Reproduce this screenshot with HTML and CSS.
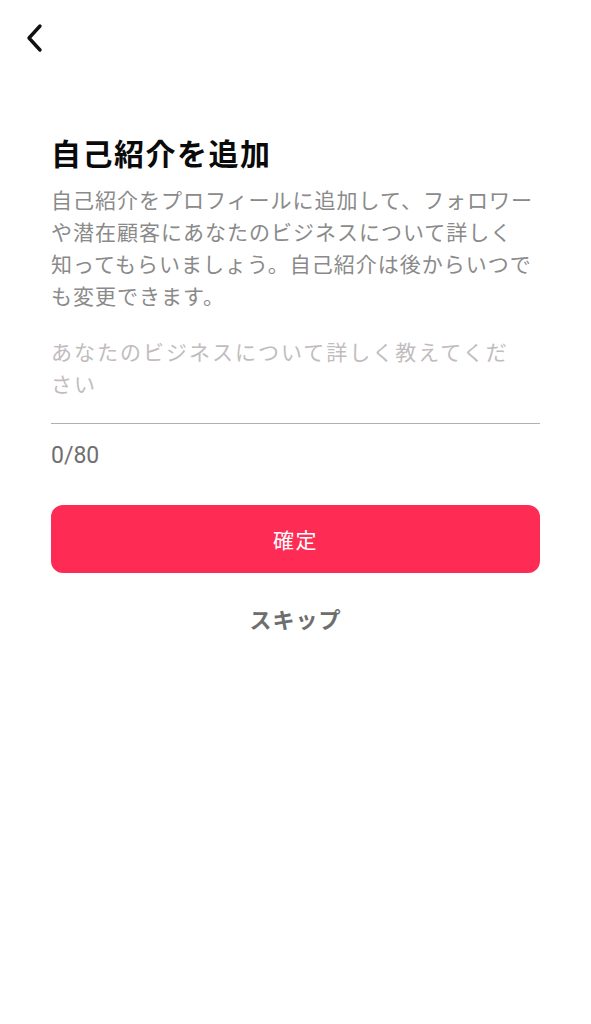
FILE: index.html
```html
<!DOCTYPE html>
<html lang="ja">
<head>
<meta charset="utf-8">
<title>自己紹介を追加</title>
<link rel="stylesheet" href="styles.css">
</head>
<body>
<div class="page">
  <header class="topbar">
    <button class="back" aria-label="戻る">
      <svg width="18" height="30" viewBox="0 0 18 30" fill="none">
        <path d="M15 3 L4 15 L15 27" stroke="#111" stroke-width="3.4" stroke-linecap="round" stroke-linejoin="round"/>
      </svg>
    </button>
  </header>
  <main class="content">
    <h1 class="title">自己紹介を追加</h1>
    <p class="desc">自己紹介をプロフィールに追加して、フォロワー<br>や潜在顧客にあなたのビジネスについて詳しく<br>知ってもらいましょう。自己紹介は後からいつで<br>も変更できます。</p>
    <div class="field">
      <div class="placeholder">あなたのビジネスについて詳しく教えてくだ<br>さい</div>
    </div>
    <div class="counter">0/80</div>
    <button class="confirm">確定</button>
    <button class="skip">スキップ</button>
  </main>
</div>
</body>
</html>
```
FILE: styles.css
```css
* { box-sizing: border-box; }
html, body { margin: 0; padding: 0; background: #fff; }
body {
  font-family: "Noto Sans CJK JP", "Noto Sans", sans-serif;
  width: 591px;
  height: 1024px;
  overflow: hidden;
}
.page { display: flex; flex-direction: column; }
.topbar {
  height: 76px;
  padding: 23px 0 0 25px;
}
.back {
  background: none;
  border: 0;
  padding: 0;
  width: 20px;
  height: 30px;
  display: flex;
}
.content {
  display: flex;
  flex-direction: column;
  padding: 0 51px;
}
.title {
  margin: 57px 0 0;
  font-size: 30px;
  line-height: 39px;
  font-weight: 700;
  color: #0a0a0a;
  letter-spacing: 1.5px;
}
.desc {
  margin: 11px 0 0;
  font-size: 21px;
  line-height: 32px;
  letter-spacing: 1px;
  color: #8a8a8a;
}
.field {
  margin-top: 24px;
  padding-bottom: 24px;
  border-bottom: 1px solid #b0b0b0;
}
.placeholder {
  font-size: 21px;
  line-height: 32px;
  letter-spacing: 2px;
  color: #c2bcbe;
}
.counter {
  margin-top: 16px;
  font-family: "Roboto", "Noto Sans", sans-serif;
  font-size: 23px;
  line-height: 32px;
  color: #6f6f6f;
}
.confirm {
  margin-top: 33px;
  height: 68px;
  border: 0;
  border-radius: 12px;
  background: #fe2c55;
  color: #fff;
  font-family: inherit;
  font-size: 21px;
  font-weight: 400;
  letter-spacing: 1.5px;
}
.skip {
  margin-top: 29px;
  align-self: center;
  background: none;
  border: 0;
  padding: 0;
  font-family: inherit;
  font-size: 22px;
  line-height: 32px;
  font-weight: 700;
  letter-spacing: 1px;
  color: #6e6e6e;
}
```
